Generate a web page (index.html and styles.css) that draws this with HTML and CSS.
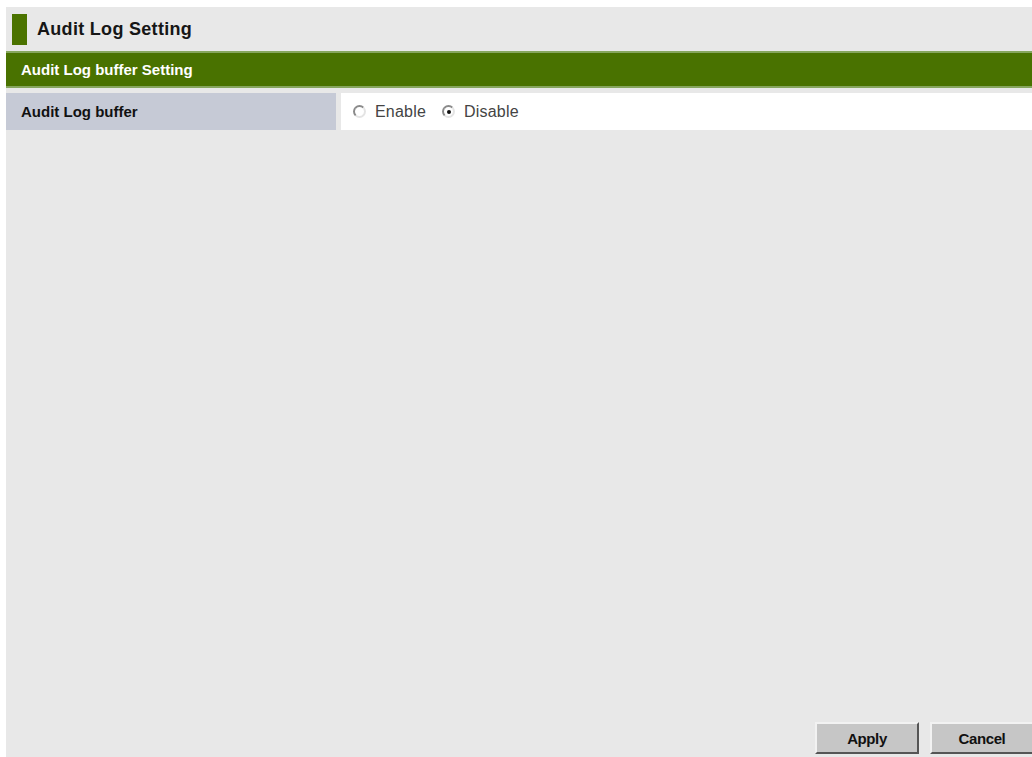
FILE: index.html
```html
<!DOCTYPE html>
<html lang="en">
<head>
<meta charset="utf-8">
<title>Audit Log Setting</title>
<link rel="stylesheet" href="styles.css">
</head>
<body>
<div class="page">
  <div class="title-row">
    <span class="marker"></span>
    <h1 class="title">Audit Log Setting</h1>
  </div>
  <div class="section-bar">Audit Log buffer Setting</div>
  <div class="field-row">
    <div class="field-label">Audit Log buffer</div>
    <div class="field-value">
      <label class="choice"><input type="radio" name="buffer" value="enable"><span>Enable</span></label>
      <label class="choice"><input type="radio" name="buffer" value="disable" checked><span>Disable</span></label>
    </div>
  </div>
  <div class="spacer"></div>
  <div class="actions">
    <button class="btn" type="button">Apply</button>
    <button class="btn" type="button">Cancel</button>
  </div>
</div>
</body>
</html>
```
FILE: styles.css
```css
html, body {
  margin: 0;
  padding: 0;
  background: #ffffff;
}

body {
  font-family: "Liberation Sans", Arial, sans-serif;
  color: #111;
}

.page {
  margin: 7px 0 0 6px;
  height: 750px;
  background: #e8e8e8;
  display: flex;
  flex-direction: column;
}

.title-row {
  height: 44px;
  display: flex;
  align-items: center;
  gap: 10px;
  padding-left: 6px;
}

.marker {
  width: 15px;
  height: 31px;
  background: #4b7300;
  margin-top: 1px;
}

.title {
  margin: 0;
  font-size: 18px;
  font-weight: bold;
  letter-spacing: 0.3px;
  color: #161616;
}

.section-bar {
  height: 33px;
  background: #497200;
  border-top: 2px solid #86a65e;
  border-bottom: 2px solid #86a65e;
  color: #fff;
  font-weight: bold;
  font-size: 15px;
  display: flex;
  align-items: center;
  padding-left: 15px;
}

.field-row {
  margin-top: 5px;
  height: 37px;
  display: flex;
  gap: 5px;
}

.field-label {
  width: 315px;
  background: #c6cad6;
  font-weight: bold;
  font-size: 15px;
  display: flex;
  align-items: center;
  padding-left: 15px;
}

.field-value {
  flex: 1;
  background: #fff;
  display: flex;
  align-items: center;
  padding-left: 12px;
  gap: 16px;
}

.choice {
  display: flex;
  align-items: center;
  gap: 9px;
  font-size: 16px;
  color: #444;
}

.choice span {
  letter-spacing: 0.2px;
}

.choice input {
  appearance: none;
  -webkit-appearance: none;
  margin: 0;
  width: 13px;
  height: 13px;
  border-radius: 50%;
  border: 2px solid;
  border-color: #8a8a8a #e4e4e4 #e4e4e4 #8a8a8a;
  background: #fff;
  position: relative;
}

.choice input:checked::after {
  content: "";
  position: absolute;
  left: 2.5px;
  top: 2.5px;
  width: 4px;
  height: 4px;
  border-radius: 50%;
  background: #111;
}

.spacer {
  flex: 1;
}

.actions {
  display: flex;
  justify-content: flex-end;
  gap: 11px;
  margin-bottom: 3px;
  margin-right: -2px;
}

.btn {
  width: 104px;
  height: 32px;
  background: #c6c6c6;
  border: 2px solid;
  border-color: #f2f2f2 #555 #555 #f2f2f2;
  font-family: "Liberation Sans", Arial, sans-serif;
  font-weight: bold;
  font-size: 15px;
  letter-spacing: -0.4px;
  color: #111;
  padding: 0;
}
```
